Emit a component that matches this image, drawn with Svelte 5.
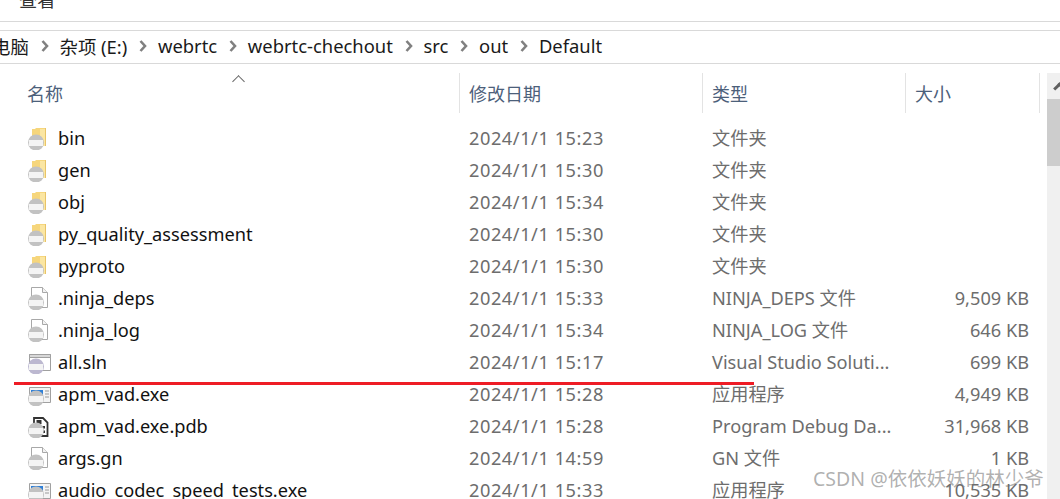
<script>
  const crumbs = ['杂项 (E:)', 'webrtc', 'webrtc-chechout', 'src', 'out', 'Default'];

  const rows = [
    { name: 'bin', date: '2024/1/1 15:23', type: '文件夹', size: '', icon: 'folder' },
    { name: 'gen', date: '2024/1/1 15:30', type: '文件夹', size: '', icon: 'folder' },
    { name: 'obj', date: '2024/1/1 15:34', type: '文件夹', size: '', icon: 'folder' },
    { name: 'py_quality_assessment', date: '2024/1/1 15:30', type: '文件夹', size: '', icon: 'folder' },
    { name: 'pyproto', date: '2024/1/1 15:30', type: '文件夹', size: '', icon: 'folder' },
    { name: '.ninja_deps', date: '2024/1/1 15:33', type: 'NINJA_DEPS 文件', size: '9,509 KB', icon: 'file' },
    { name: '.ninja_log', date: '2024/1/1 15:34', type: 'NINJA_LOG 文件', size: '646 KB', icon: 'file' },
    { name: 'all.sln', date: '2024/1/1 15:17', type: 'Visual Studio Soluti...', size: '699 KB', icon: 'sln' },
    { name: 'apm_vad.exe', date: '2024/1/1 15:28', type: '应用程序', size: '4,949 KB', icon: 'exe' },
    { name: 'apm_vad.exe.pdb', date: '2024/1/1 15:28', type: 'Program Debug Da...', size: '31,968 KB', icon: 'pdb' },
    { name: 'args.gn', date: '2024/1/1 14:59', type: 'GN 文件', size: '1 KB', icon: 'file' },
    { name: 'audio_codec_speed_tests.exe', date: '2024/1/1 15:33', type: '应用程序', size: '10,535 KB', icon: 'exe' },
  ];
</script>

{#snippet chevron()}
  <svg class="chev" width="8" height="12" viewBox="0 0 8 12"><path d="M1.500 1 6 6l-4.500 5" fill="none" stroke="#808080" stroke-width="2.600" /></svg>
{/snippet}

{#snippet fileIcon(kind)}
  <svg class="icon" width="24" height="23" viewBox="0 0 24 23">
    {#if kind === 'folder'}
      <path d="M5 2h3l1-1h10v18H5z" fill="#f6d67c" />
      <path d="M13 2h6v17h-6z" fill="#fbe6a2" />
      <path d="M18.500 1v18" stroke="#e8c468" />
    {:else if kind === 'file'}
      <path d="M4.500 .5h11l5 5v15h-16z" fill="#fff" stroke="#a8a8a8" />
      <path d="M15.500 .5v5h5" fill="#f2f2f2" stroke="#a8a8a8" />
    {:else if kind === 'sln'}
      <path d="M2.500 3.500h21v16h-21z" fill="#fff" stroke="#a0a0a0" />
      <path d="M2.500 3.500h21v3h-21z" fill="#d8d8d8" stroke="#a0a0a0" />
    {:else if kind === 'exe'}
      <path d="M2.500 4.500h21v15h-21z" fill="#f4f4f4" stroke="#a0a0a0" />
      <path d="M4 7h12v9H4z" fill="#2f7fd6" />
      <path d="M18 8h4M18 11h4M18 14h4" stroke="#9a9a9a" />
    {:else}
      <path d="M7 3h9l4.500 4.500V21H7z" fill="#fff" stroke="#333" stroke-width="1.800" />
      <path d="M9.500 5h5v4h-5zM11 11h7v2.500h-7zM11 15.500h7V18h-7z" fill="#333" />
    {/if}
    <circle cx="9" cy="15.500" r="8" fill={kind === 'sln' ? '#bcb8d0' : '#c2c2c2'} />
    <rect x="2" y="13" width="14" height="6" fill="#f4f4f4" />
  </svg>
{/snippet}

<div class="window">
  <div class="tabs"><span class="tab">查看</span></div>
  <nav class="crumbs">
    <span class="clipped">电脑</span>
    {#each crumbs as crumb}
      {@render chevron()}
      <span>{crumb}</span>
    {/each}
  </nav>

  <div class="body">
    <div class="list">
      <div class="head">
        <div class="col name">名称<span class="sort"></span></div>
        <div class="col">修改日期</div>
        <div class="col">类型</div>
        <div class="col">大小</div>
      </div>
      {#each rows as row}
        <div class="row">
          <div class="cell name">{@render fileIcon(row.icon)}<span>{row.name}</span></div>
          <div class="cell date">{row.date}</div>
          <div class="cell">{row.type}</div>
          <div class="cell size">{row.size}</div>
        </div>
      {/each}
    </div>
    <div class="scrollbar">
      <div class="arrow"></div>
      <div class="thumb"></div>
    </div>
  </div>

  <svg class="redline" width="760" height="6" viewBox="0 0 760 6"><path d="M14 2.500 400 2.500 754 2.500" fill="none" stroke="#ee1c25" stroke-width="3" /></svg>
  <div class="watermark">CSDN @依依妖妖的林少爷</div>
</div>

<style>
  :global(body) {
    margin: 0;
    background: #fff;
  }

  .window {
    position: relative;
    width: 1060px;
    height: 499px;
    overflow: hidden;
    font-family: "Noto Sans", "Noto Sans CJK SC", sans-serif;
    font-size: 18.2px;
    color: #1a1a1a;
    background: #fff;
  }

  .tabs {
    height: 21px;
    border-bottom: 1px solid #d9d9d9;
    overflow: hidden;
  }

  .tab {
    display: block;
    margin: -12px 0 0 19px;
    line-height: 24px;
    color: #333;
  }

  .crumbs {
    display: flex;
    align-items: center;
    height: 34px;
    margin-top: 8px;
    padding-bottom: 3px;
    box-sizing: border-box;
    border-bottom: 1px solid #d9d9d9;
    border-top: 1px solid #d9d9d9;
    white-space: nowrap;
    font-size: 18.4px;
  }

  .clipped {
    margin-left: -8px;
  }

  .chev {
    margin: 0 10.700px 0 12px;
    flex: none;
  }

  .body {
    display: flex;
    margin-top: 9px;
  }

  .list {
    width: 1047px;
  }

  .head,
  .row {
    display: grid;
    grid-template-columns: 460px 243px 203px 134px;
  }

  .head {
    height: 40px;
    margin-bottom: 9px;
  }

  .col {
    position: relative;
    padding-left: 9px;
    padding-top: 1px;
    line-height: 40px;
    height: 39px;
    color: #4c607a;
    border-right: 1px solid #e3e3e3;
    font-size: 18px;
  }

  .col.name {
    padding-left: 27px;
  }

  .sort {
    position: absolute;
    left: 234px;
    top: 4px;
    width: 8px;
    height: 8px;
    border-left: 1px solid #666;
    border-top: 1px solid #666;
    transform: rotate(45deg);
  }

  .row {
    height: 32px;
    line-height: 32px;
    color: #6d6d6d;
  }

  .cell {
    padding-left: 9px;
    white-space: nowrap;
  }

  .cell.name {
    display: flex;
    align-items: center;
    padding-left: 27px;
    color: #111;
  }

  .cell.date {
    letter-spacing: 0.55px;
  }

  .icon {
    flex: none;
    margin-right: 7px;
  }

  .cell.size {
    padding: 0 11px 0 0;
    text-align: right;
  }

  .scrollbar {
    width: 13px;
    height: 427px;
    background: #f0f0f0;
  }

  .arrow {
    height: 26px;
    overflow: hidden;
    position: relative;
  }

  .arrow::before {
    content: "";
    position: absolute;
    left: 8px;
    top: 11px;
    width: 6px;
    height: 6px;
    border-left: 3px solid #606060;
    border-top: 3px solid #606060;
    transform: rotate(45deg);
  }

  .thumb {
    height: 67px;
    background: #cdcdcd;
  }

  .redline {
    position: absolute;
    left: 0;
    top: 381px;
  }

  .watermark {
    position: absolute;
    left: 813px;
    top: 467px;
    font-size: 19.5px;
    line-height: 24px;
    color: rgba(110, 110, 110, 0.55);
    white-space: nowrap;
  }
</style>
